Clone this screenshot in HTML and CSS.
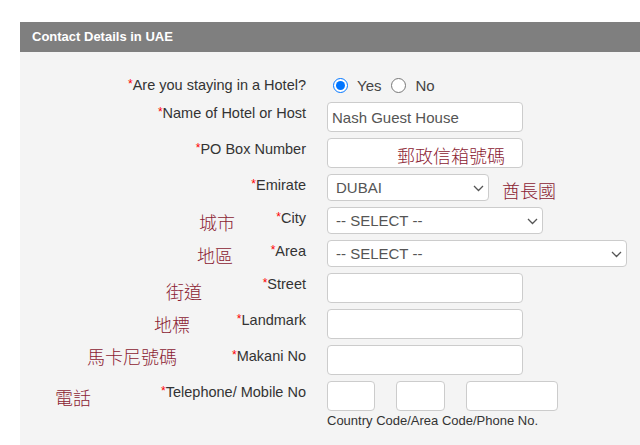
FILE: index.html
```html
<!DOCTYPE html>
<html>
<head>
<meta name="viewport" content="width=device-width, initial-scale=1">
<link rel="stylesheet" href="styles.css">
</head>
<body>
  <div class="page">
    <div class="panel">
      <div class="panel-head">Contact Details in UAE</div>

      <div class="form">
        <label class="lbl"><span class="req">*</span>Are you staying in a Hotel?</label>
        <div class="field radios">
          <input type="radio" name="hotel" id="yes" checked>
          <label for="yes">Yes</label>
          <input type="radio" name="hotel" id="no">
          <label for="no">No</label>
        </div>

        <label class="lbl"><span class="req">*</span>Name of Hotel or Host</label>
        <div class="field"><input type="text" class="txt" value="Nash Guest House"></div>

        <label class="lbl"><span class="req">*</span>PO Box Number</label>
        <div class="field"><input type="text" class="txt"></div>

        <label class="lbl"><span class="req">*</span>Emirate</label>
        <div class="field">
          <div class="sel-wrap sel-sm">
            <select class="sel"><option>DUBAI</option></select>
            <svg class="chev" width="11" height="7" viewBox="0 0 11 7"><path d="M1 1l4.5 4.5L10 1" fill="none" stroke="#555" stroke-width="1.3"/></svg>
          </div>
        </div>

        <label class="lbl"><span class="req">*</span>City</label>
        <div class="field">
          <div class="sel-wrap sel-md">
            <select class="sel"><option>-- SELECT --</option></select>
            <svg class="chev" width="11" height="7" viewBox="0 0 11 7"><path d="M1 1l4.5 4.5L10 1" fill="none" stroke="#555" stroke-width="1.3"/></svg>
          </div>
        </div>

        <label class="lbl"><span class="req">*</span>Area</label>
        <div class="field">
          <div class="sel-wrap sel-lg">
            <select class="sel"><option>-- SELECT --</option></select>
            <svg class="chev" width="11" height="7" viewBox="0 0 11 7"><path d="M1 1l4.5 4.5L10 1" fill="none" stroke="#555" stroke-width="1.3"/></svg>
          </div>
        </div>

        <label class="lbl"><span class="req">*</span>Street</label>
        <div class="field"><input type="text" class="txt"></div>

        <label class="lbl"><span class="req">*</span>Landmark</label>
        <div class="field"><input type="text" class="txt"></div>

        <label class="lbl"><span class="req">*</span>Makani No</label>
        <div class="field"><input type="text" class="txt"></div>

        <label class="lbl"><span class="req">*</span>Telephone/ Mobile No</label>
        <div class="field">
          <div class="phone">
            <input type="text" class="txt ph-cc">
            <input type="text" class="txt ph-ac">
            <input type="text" class="txt ph-no">
          </div>
          <div class="hint">Country Code/Area Code/Phone No.</div>
        </div>
      </div>
    </div>

    <!-- hand-written translations laid over the form -->
    <span class="note" style="left:397px;top:144px">郵政信箱號碼</span>
    <span class="note" style="left:502px;top:179px">酋長國</span>
    <span class="note" style="left:199px;top:211px">城市</span>
    <span class="note" style="left:197px;top:244px">地區</span>
    <span class="note" style="left:166px;top:280px">街道</span>
    <span class="note" style="left:154px;top:313px">地標</span>
    <span class="note" style="left:87px;top:345px">馬卡尼號碼</span>
    <span class="note" style="left:55px;top:386px">電話</span>
  </div>
</body>
</html>
```

FILE: styles.css
```css
* {
  box-sizing: border-box;
}

body {
  margin: 0;
  background: #fff;
  font-family: "Liberation Sans", Arial, sans-serif;
  color: #333;
}

.page {
  position: relative;
  padding: 22px 0 0 20px;
  height: 445px;
  overflow: hidden;
}

/* Grey panel with its title bar */
.panel {
  background: #f4f4f4;
  height: 100%;
}

.panel-head {
  background: #7f7f7f;
  color: #fff;
  font-weight: bold;
  font-size: 13px;
  height: 30px;
  line-height: 30px;
  padding-left: 12px;
}

/* Two column form: labels right, fields left */
.form {
  display: grid;
  grid-template-columns: 286px 1fr;
  column-gap: 21px;
  row-gap: 6px;
  padding-top: 22px;
}

.lbl {
  text-align: right;
  font-size: 14.5px;
  line-height: 17px;
  padding-top: 2px;
  color: #333;
}

.req {
  color: #f00;
  font-size: 12px;
  vertical-align: 2px;
}

.field {
  font-size: 15px;
}

.radios {
  display: flex;
  align-items: center;
  height: 22px;
  color: #444;
}

.radios input {
  margin: 0 9px 0 6px;
  width: 15px;
  height: 15px;
}

.radios label {
  margin-right: 4px;
}

.txt {
  display: block;
  width: 196px;
  height: 30px;
  margin: 0;
  border: 1px solid #ccc;
  border-radius: 4px;
  background: #fff;
  padding: 0 4px;
  font-family: "Liberation Sans", Arial, sans-serif;
  font-size: 15px;
  color: #555;
}

.sel-wrap {
  position: relative;
}

.sel {
  display: block;
  width: 100%;
  height: 27px;
  margin: 0;
  border: 1px solid #ccc;
  border-radius: 4px;
  background: #fff;
  padding: 0 4px 0 8px;
  font-family: "Liberation Sans", Arial, sans-serif;
  font-size: 15px;
  color: #555;
  appearance: none;
  -webkit-appearance: none;
}

/* chevron drawn over the right end of the select */
.chev {
  position: absolute;
  right: 5px;
  top: 11px;
  pointer-events: none;
}

.sel-sm { width: 162px; }
.sel-md { width: 216px; }
.sel-lg { width: 300px; }

.phone {
  display: flex;
  gap: 21px;
}

.ph-cc { width: 48px; }
.ph-ac { width: 49px; }
.ph-no { width: 92px; }

.hint {
  font-size: 13px;
  margin-top: 2px;
  color: #333;
}

/* Chinese notes written on the screenshot */
.note {
  position: absolute;
  font-family: "Noto Sans CJK TC", serif;
  font-weight: 300;
  font-size: 18px;
  line-height: 22px;
  color: #8b2232;
  white-space: nowrap;
}
```
